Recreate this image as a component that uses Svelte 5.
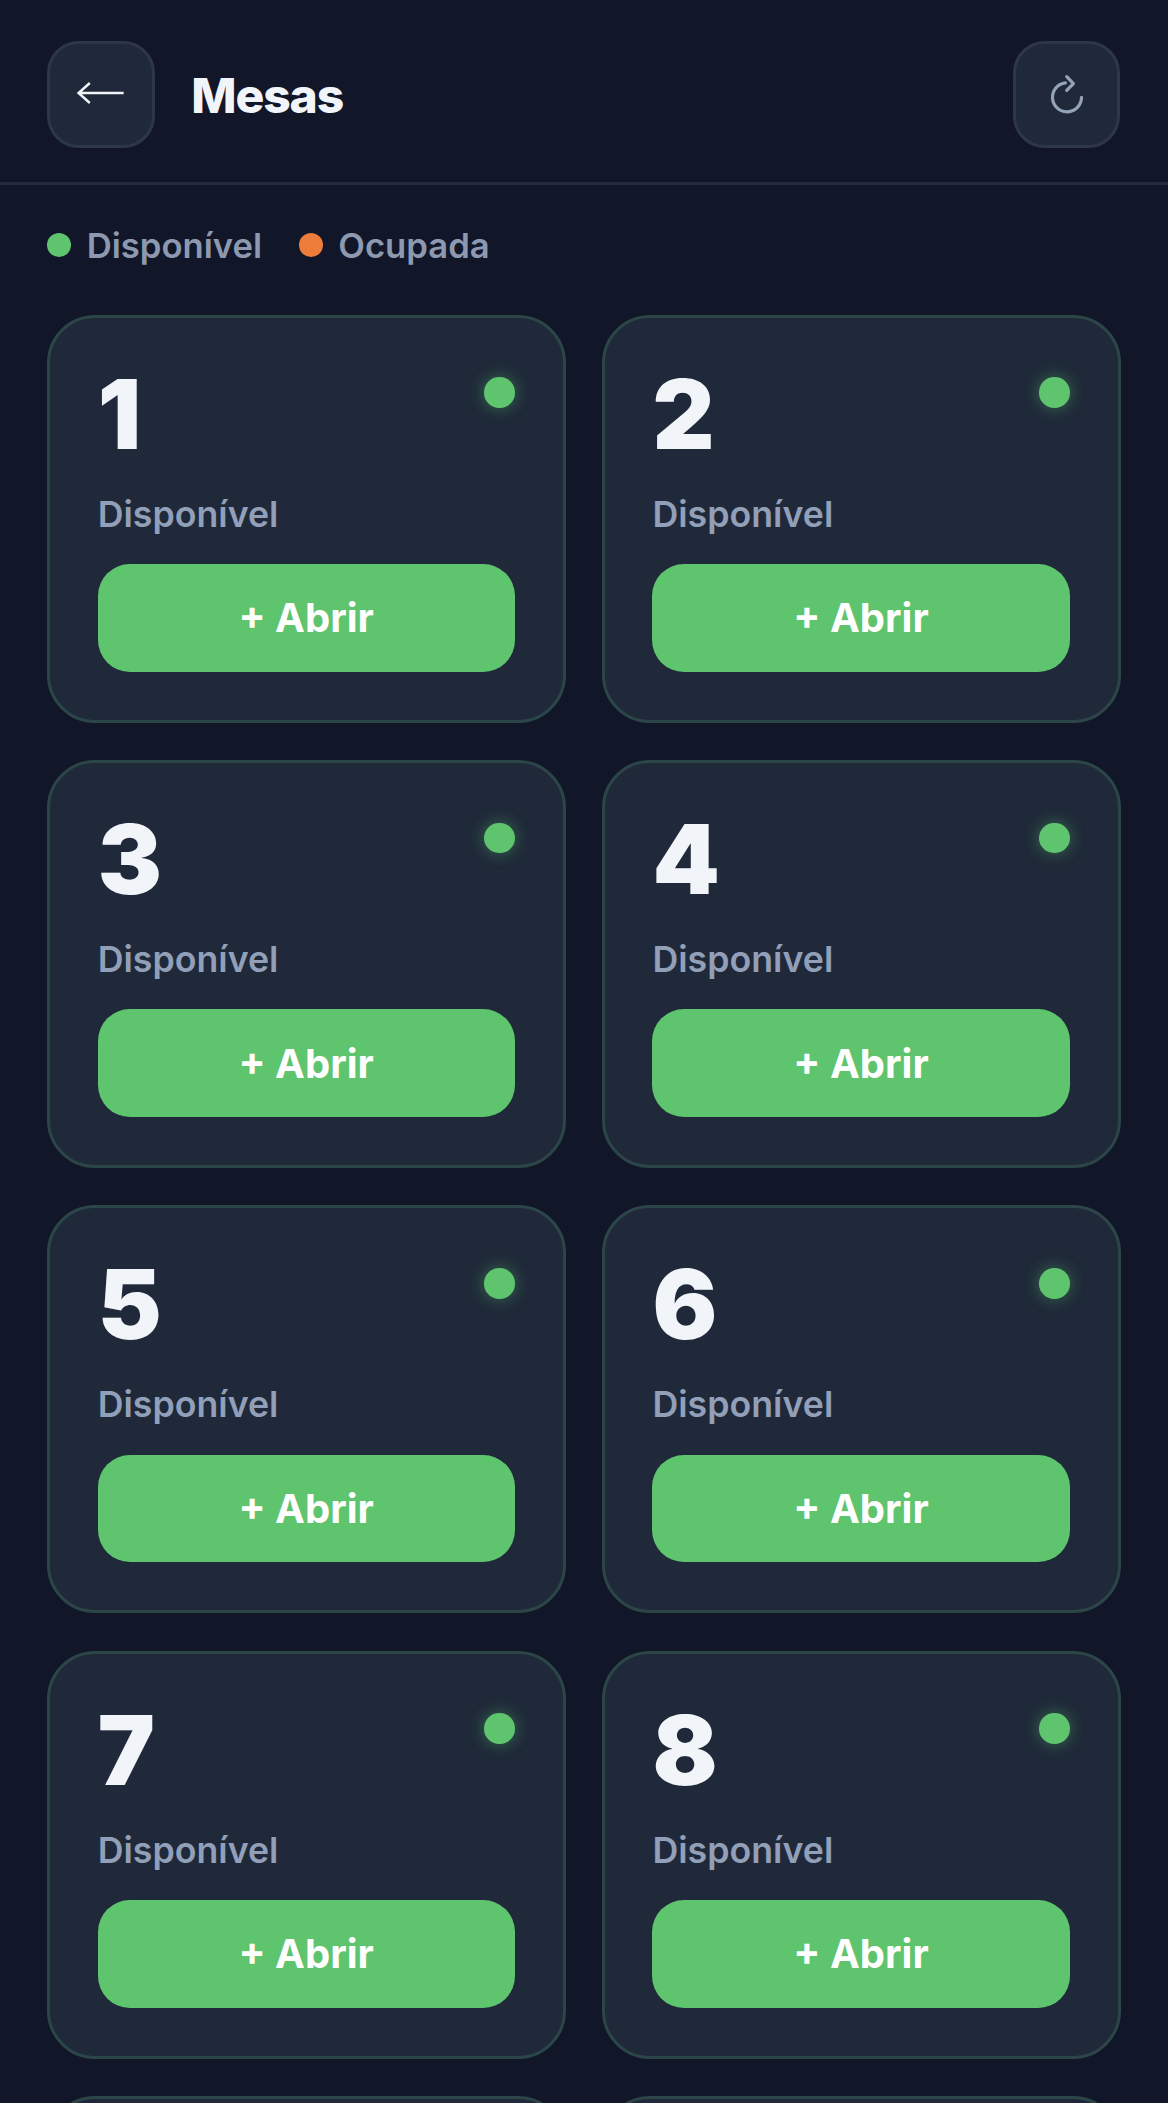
<script>
  const tables = [1, 2, 3, 4, 5, 6, 7, 8, 9, 10];
</script>

<div class="page">
  <header class="topbar">
    <button class="icon-btn" aria-label="Voltar">
      <svg viewBox="0 0 18 18" width="18" height="18">
        <path d="M17.5 8.25H0.6M4.8 4.5L0.6 8.25L4.8 12" fill="none" stroke="#f1f5f9" stroke-width="0.9" />
      </svg>
    </button>
    <h1>Mesas</h1>
    <button class="icon-btn refresh" aria-label="Atualizar">
      <svg viewBox="0 0 18 18" width="18" height="18">
        <path d="M8.4 4.45A5.44 5.44 0 1 0 14.44 9.86" fill="none" stroke="#94a3b8" stroke-width="1.2" stroke-linecap="round" />
        <path d="M8.9 2.1L11.4 4.7L8.9 7.3" fill="none" stroke="#94a3b8" stroke-width="1.2" stroke-linecap="round" stroke-linejoin="round" />
      </svg>
    </button>
  </header>

  <div class="legend">
    <span class="legend-item"><i class="dot green"></i>Disponível</span>
    <span class="legend-item"><i class="dot orange"></i>Ocupada</span>
  </div>

  <div class="grid">
    {#each tables as n}
      <div class="card">
        <div class="card-top">
          <span class="number">{n}</span>
          <i class="status-dot"></i>
        </div>
        <div class="status">Disponível</div>
        <button class="open">+ Abrir</button>
      </div>
    {/each}
  </div>
</div>

<style>
  :global(body) {
    background: #111729;
    overflow: hidden;
  }

  .page {
    zoom: 2.6667;
    font-family: Inter, sans-serif;
    color: #f1f5f9;
    height: 789px;
    overflow: hidden;
  }

  .topbar {
    display: flex;
    align-items: center;
    gap: 13.7px;
    padding: 15.5px 17.9px 12.9px 17.8px;
    border-bottom: 1.13px solid #232c3c;
  }

  .icon-btn {
    width: 40.2px;
    height: 40px;
    padding: 0;
    display: flex;
    align-items: center;
    justify-content: center;
    background: #1f2939;
    border: 1.13px solid #2d3748;
    border-radius: 12px;
  }

  .refresh {
    margin-left: auto;
  }

  h1 {
    margin: 1px 0 0;
    font-size: 18px;
    font-weight: 800;
    letter-spacing: -0.4px;
  }

  .legend {
    display: flex;
    gap: 13.9px;
    padding: 14.6px 17.8px 12.2px;
    font-size: 13px;
    font-weight: 600;
    color: #8d99b0;
  }

  .legend-item {
    display: flex;
    align-items: center;
    gap: 5.7px;
  }

  .dot {
    width: 9px;
    height: 9px;
    border-radius: 50%;
  }

  .green {
    background: #5ec46e;
  }

  .orange {
    background: #ed7d3a;
  }

  .grid {
    display: grid;
    grid-template-columns: 1fr 1fr;
    gap: 14px 13.5px;
    padding: 6px 17.7px 0;
  }

  .card {
    height: 153px;
    box-sizing: border-box;
    padding: 18px 18.1px 18px 17.8px;
    background: #1f2939;
    border: 1.13px solid #2c4648;
    border-radius: 18px;
    display: flex;
    flex-direction: column;
  }

  .card-top {
    display: flex;
    justify-content: space-between;
    align-items: flex-start;
  }

  .number {
    font-size: 36px;
    font-weight: 900;
    line-height: 1;
  }

  .status-dot {
    width: 11.5px;
    height: 11.5px;
    margin-top: 4.3px;
    border-radius: 50%;
    background: #5ec46e;
    box-shadow: 0 0 6px rgba(94, 196, 110, 0.45);
  }

  .status {
    margin-top: 11.2px;
    font-size: 13.4px;
    font-weight: 600;
    color: #929fb8;
  }

  .open {
    margin-top: auto;
    height: 40.4px;
    width: 100%;
    background: #5ec46e;
    color: #fff;
    border: none;
    border-radius: 12px;
    font-family: inherit;
    font-size: 15px;
    font-weight: 700;
  }
</style>
